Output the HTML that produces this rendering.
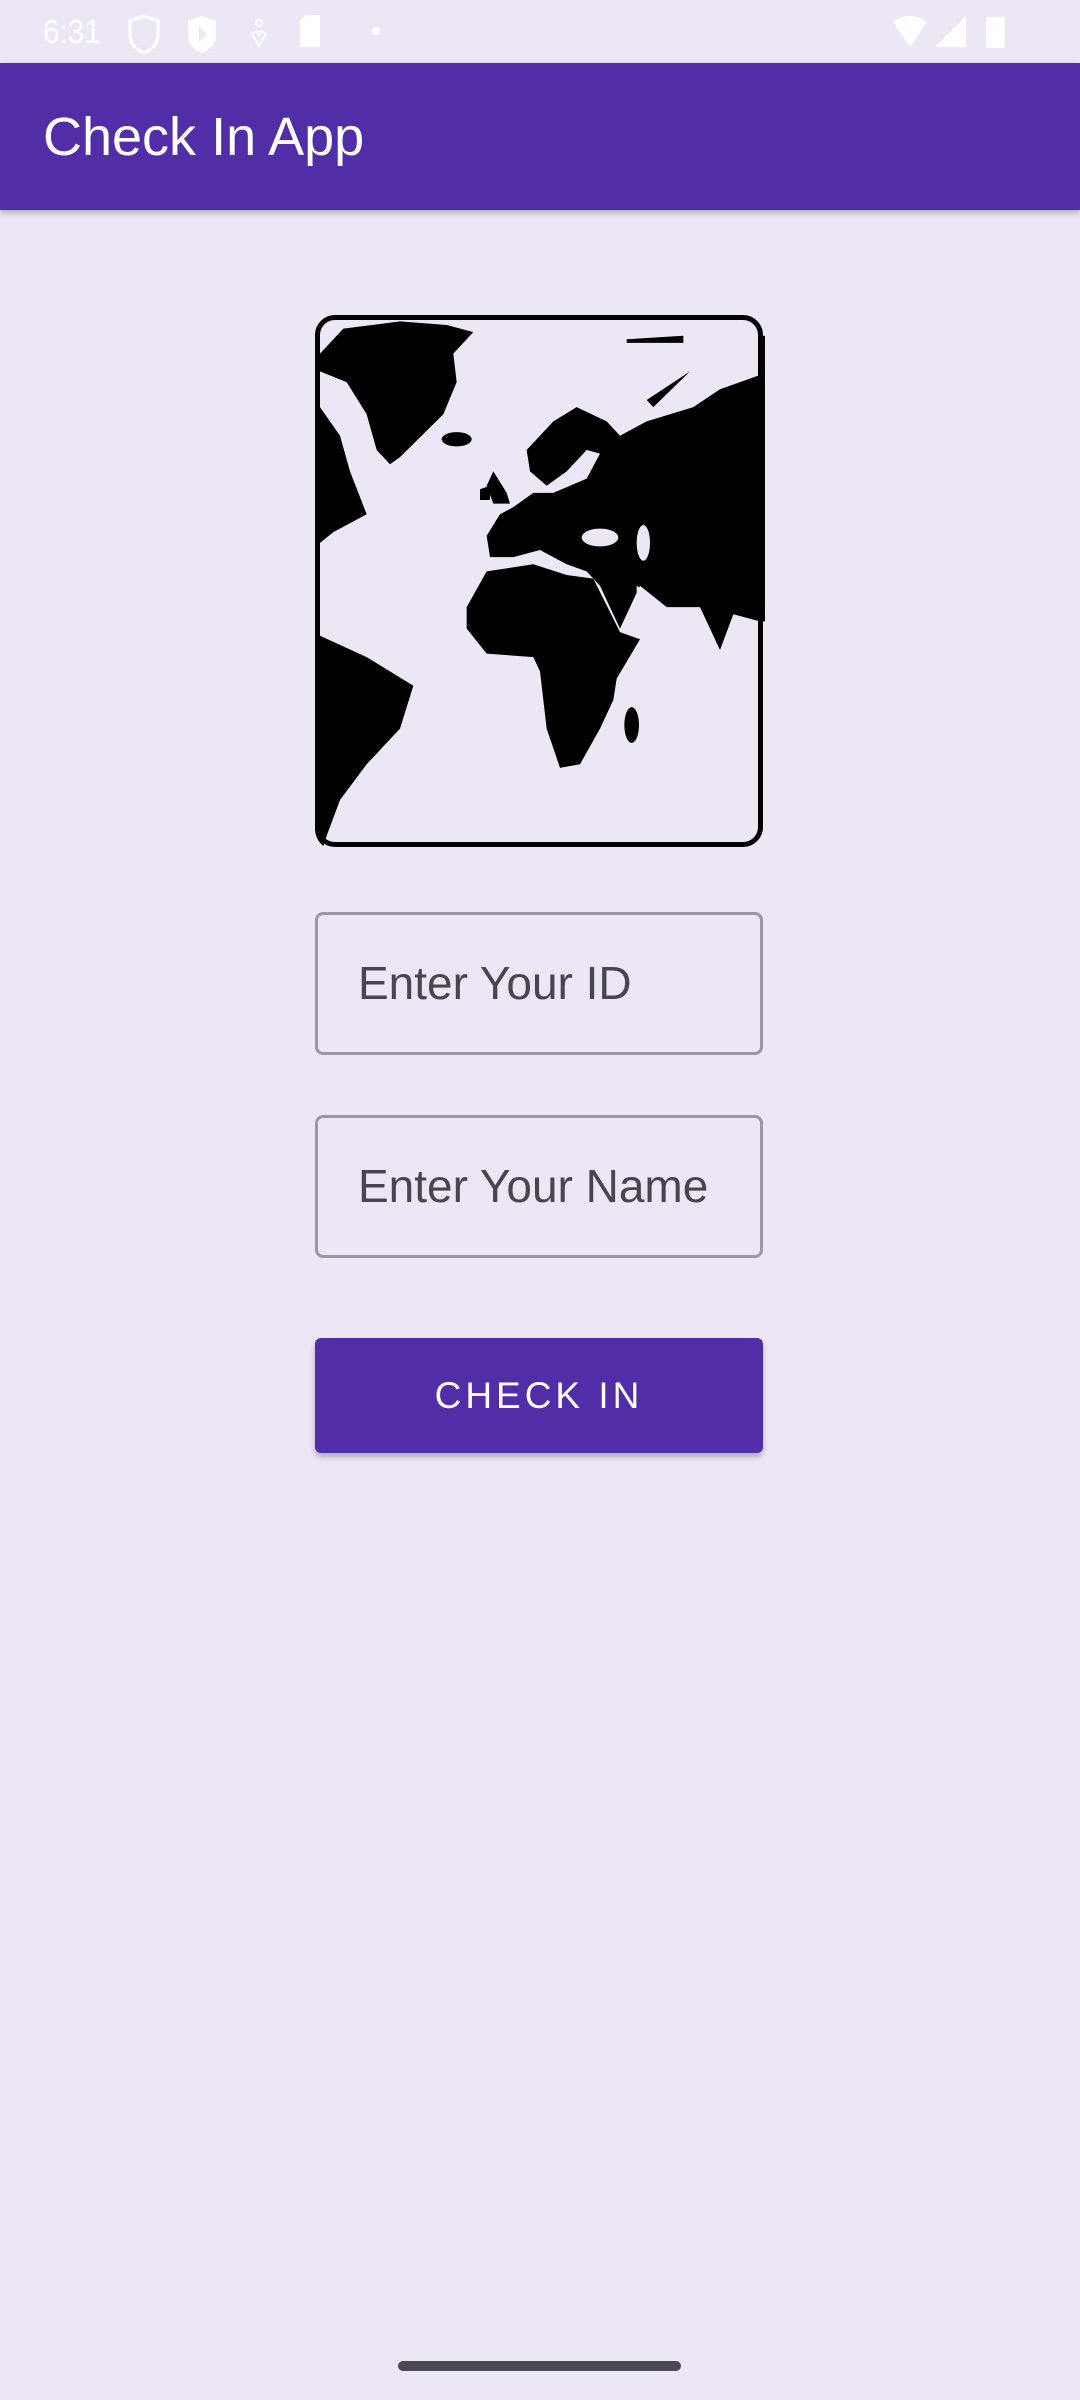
<!DOCTYPE html>
<html><head><meta charset="utf-8"><style>
body{margin:0;width:1080px;height:2400px;background:#ede7f5;position:relative;overflow:hidden;font-family:"Liberation Sans",sans-serif}
.abs{position:absolute}
.bar{left:0;top:63px;width:1080px;height:147px;background:#512da8;box-shadow:0 3px 6px rgba(0,0,0,.25)}
.title{left:43px;top:105px;color:#fff;font-size:54px;line-height:64px}
.field{left:315px;width:448px;height:143px;box-sizing:border-box;border:3px solid #9c97a2;border-radius:8px;color:#49454f;font-size:46px;line-height:137px;padding-left:40px;white-space:nowrap}
.btn{left:315px;top:1338px;width:448px;height:115px;background:#512da8;border-radius:6px;color:#fff;font-size:37px;letter-spacing:4px;text-align:center;line-height:115px;box-shadow:0 4px 6px rgba(0,0,0,.25)}
</style></head><body>
<div class="abs" style="left:43px;top:12px;color:#fff;font-size:33px;line-height:40px;transform:scaleX(.9);transform-origin:left">6:31</div>
<svg class="abs" style="left:0;top:0" width="1080" height="63">
<path d="M144 16 l14 5 v14 q0 12 -14 18 q-14 -6 -14 -18 v-14z" fill="none" stroke="#fff" stroke-width="3"/>
<path d="M202 16 l14 5 v14 q0 12 -14 18 q-14 -6 -14 -18 v-14z" fill="#fff"/>
<path d="M199 26 l8 8 -8 8z" fill="#ede7f5"/>
<circle cx="259" cy="23" r="3" fill="none" stroke="#fff" stroke-width="2"/>
<path d="M252 34 q7 -6 7 2 q0 -8 7 -2 l-7 12z" fill="none" stroke="#fff" stroke-width="2"/>
<path d="M306 15 h14 v32 h-20 v-26z" fill="#fff"/>
<circle cx="376" cy="31" r="4" fill="#fff"/>
<path d="M893 22 q17 -12 34 0 l-17 25z" fill="#fff"/>
<path d="M966 16 v31 h-31z" fill="#fff"/>
<rect x="986" y="17" width="19" height="31" rx="2" fill="#fff"/>
</svg>
<div class="abs bar"></div>
<div class="abs title">Check In App</div>

<svg class="abs" style="left:300px;top:300px" width="480" height="560" viewBox="0 0 1440 1568" preserveAspectRatio="none">
<defs><clipPath id="c"><rect x="45" y="45" width="1350" height="1495" rx="60"/></clipPath></defs>
<g clip-path="url(#c)" fill="#000">
<path d="M60 150 L130 80 300 60 440 70 520 90 460 150 470 230 430 320 300 440 270 460 230 420 200 320 140 230 60 200Z"/>
<ellipse cx="470" cy="390" rx="45" ry="20"/>
<path d="M580 480 L620 540 630 570 580 570 560 520Z"/>
<path d="M540 530 L570 520 570 560 540 560Z"/>
<path d="M560 660 L600 600 640 580 700 540 760 540 860 500 900 430 860 420 800 480 740 520 690 480 680 420 760 340 830 300 920 340 960 380 1040 340 1180 300 1260 250 1380 210 1380 100 1440 100 1440 900 1380 900 1300 880 1260 980 1200 860 1100 860 1020 800 960 920 900 800 860 760 800 740 720 700 640 720 570 720Z"/>
<path d="M1040 280 L1170 200 1060 300Z"/>
<path d="M560 760 L700 740 800 770 880 780 960 930 1020 950 950 1060 940 1120 900 1200 840 1300 780 1310 740 1200 720 1040 700 1000 560 990 500 920 500 860Z"/>
<ellipse cx="995" cy="1190" rx="22" ry="50"/>
<path d="M0 300 L60 300 120 380 150 480 200 600 100 650 60 680 0 680Z"/>
<path d="M0 940 L60 940 200 1000 340 1080 300 1200 200 1300 120 1400 80 1500 60 1560 0 1560Z"/>
<path d="M980 110 L1150 100 1150 120 980 120Z"/>
</g>
<g fill="#ede7f5">
<ellipse cx="900" cy="665" rx="55" ry="25"/>
<ellipse cx="1030" cy="680" rx="20" ry="50"/>
<path d="M1010 800 L1100 860 1080 880 1010 820Z"/>
</g>
</svg>
<div class="abs" style="left:315px;top:315px;width:448px;height:532px;box-sizing:border-box;border:5px solid #000;border-radius:20px"></div>

<div class="abs field" style="top:912px">Enter Your ID</div>
<div class="abs field" style="top:1115px">Enter Your Name</div>
<div class="abs btn">CHECK IN</div>
<div class="abs" style="left:398px;top:2361px;width:283px;height:10px;border-radius:5px;background:#4a4850"></div>
</body></html>
